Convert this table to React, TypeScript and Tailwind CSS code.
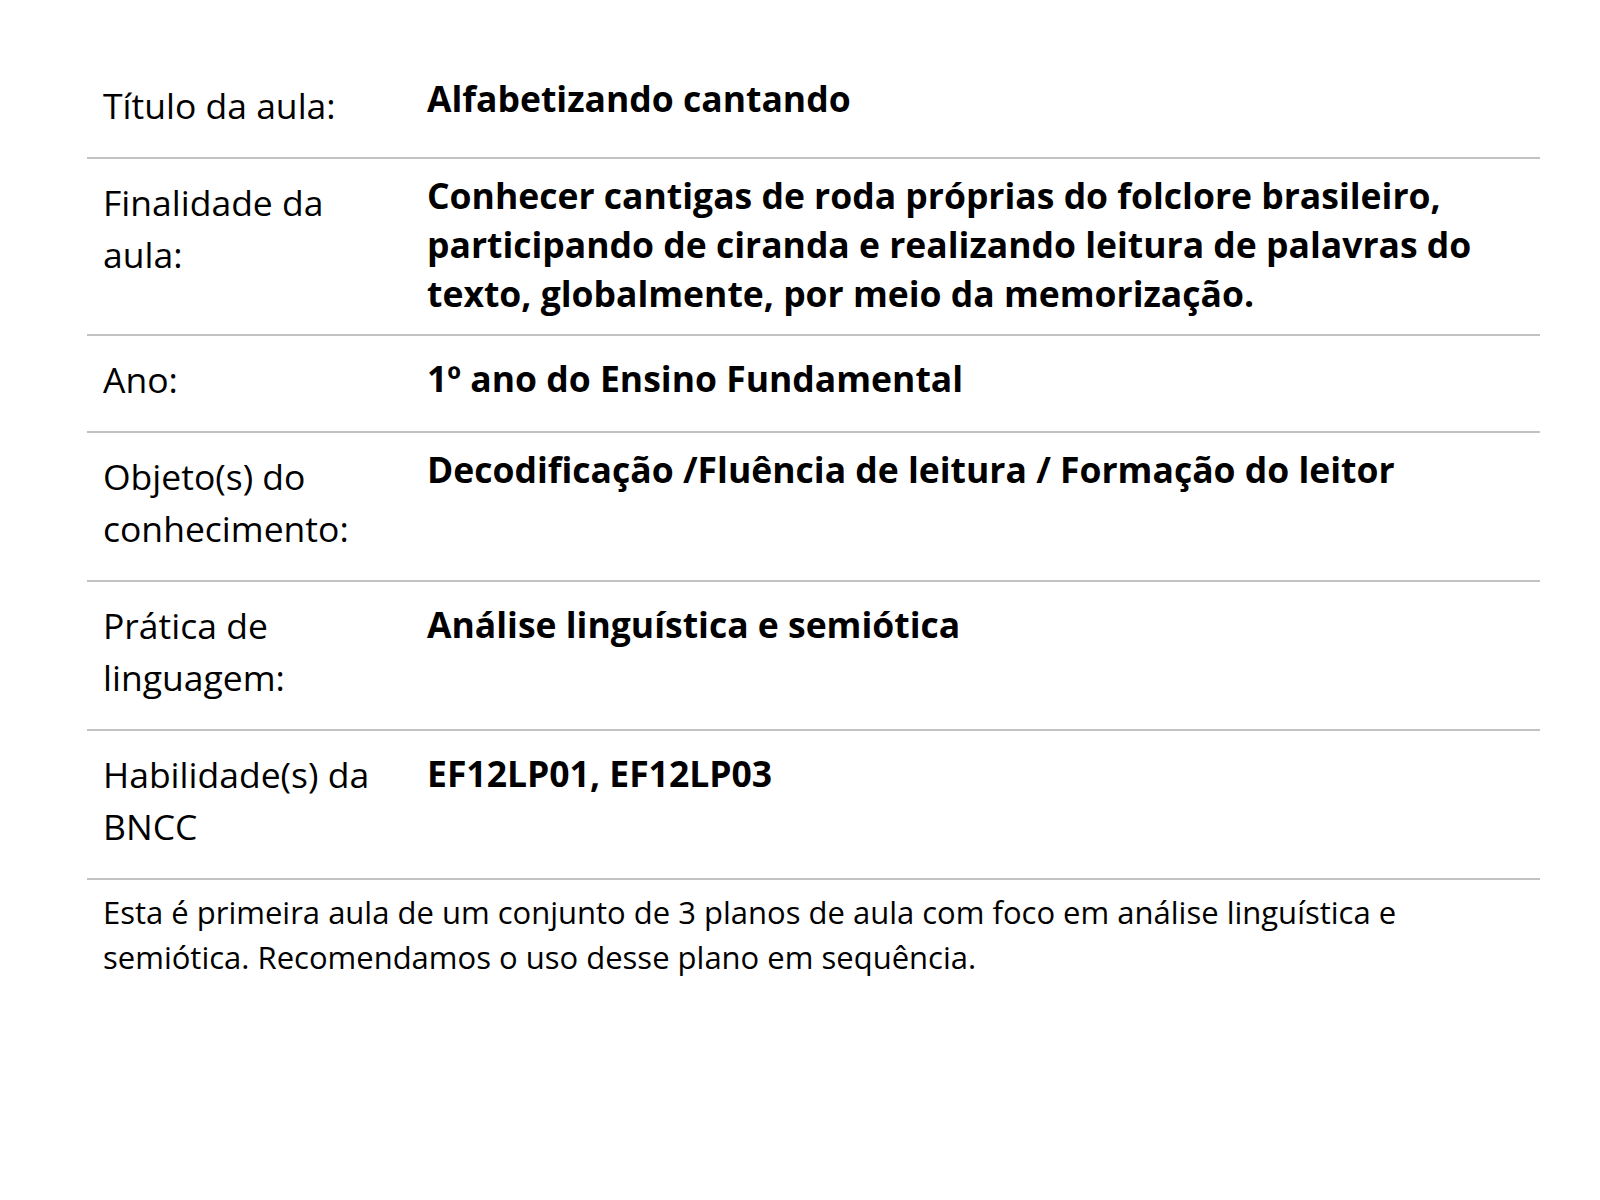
const rows: { label: string; value: string; tight?: boolean }[] = [
  { label: 'Título da aula:', value: 'Alfabetizando cantando', tight: true },
  {
    label: 'Finalidade da aula:',
    value:
      'Conhecer cantigas de roda próprias do folclore brasileiro, participando de ciranda e realizando leitura de palavras do texto, globalmente, por meio da memorização.',
    tight: true,
  },
  { label: 'Ano:', value: '1º ano do Ensino Fundamental' },
  {
    label: 'Objeto(s) do conhecimento:',
    value: 'Decodificação /Fluência de leitura / Formação do leitor',
    tight: true,
  },
  { label: 'Prática de linguagem:', value: 'Análise linguística e semiótica' },
  { label: 'Habilidade(s) da BNCC', value: 'EF12LP01, EF12LP03' },
];

export default function App() {
  return (
    <div className="min-h-screen bg-white font-['Open_Sans',sans-serif] text-black">
      <div className="pl-[87px] pr-[60px] pt-[62px]">
        {rows.map((row) => (
          <div key={row.label} className="grid grid-cols-[324px_1fr] border-b-2 border-[#c2c2c2]">
            <div className="px-4 pt-[17px] pb-[26px] text-[35.5px] leading-[52px]">{row.label}</div>
            <div
              className={`px-4 pb-[16px] text-[35.5px] leading-[49px] font-bold ${row.tight ? 'pt-[12px]' : 'pt-[18px]'}`}
            >
              {row.value}
            </div>
          </div>
        ))}
        <p className="px-4 pt-[10px] text-[31px] leading-[45px]">
          Esta é primeira aula de um conjunto de 3 planos de aula com foco em análise linguística e semiótica.
          Recomendamos o uso desse plano em sequência.
        </p>
      </div>
    </div>
  );
}
